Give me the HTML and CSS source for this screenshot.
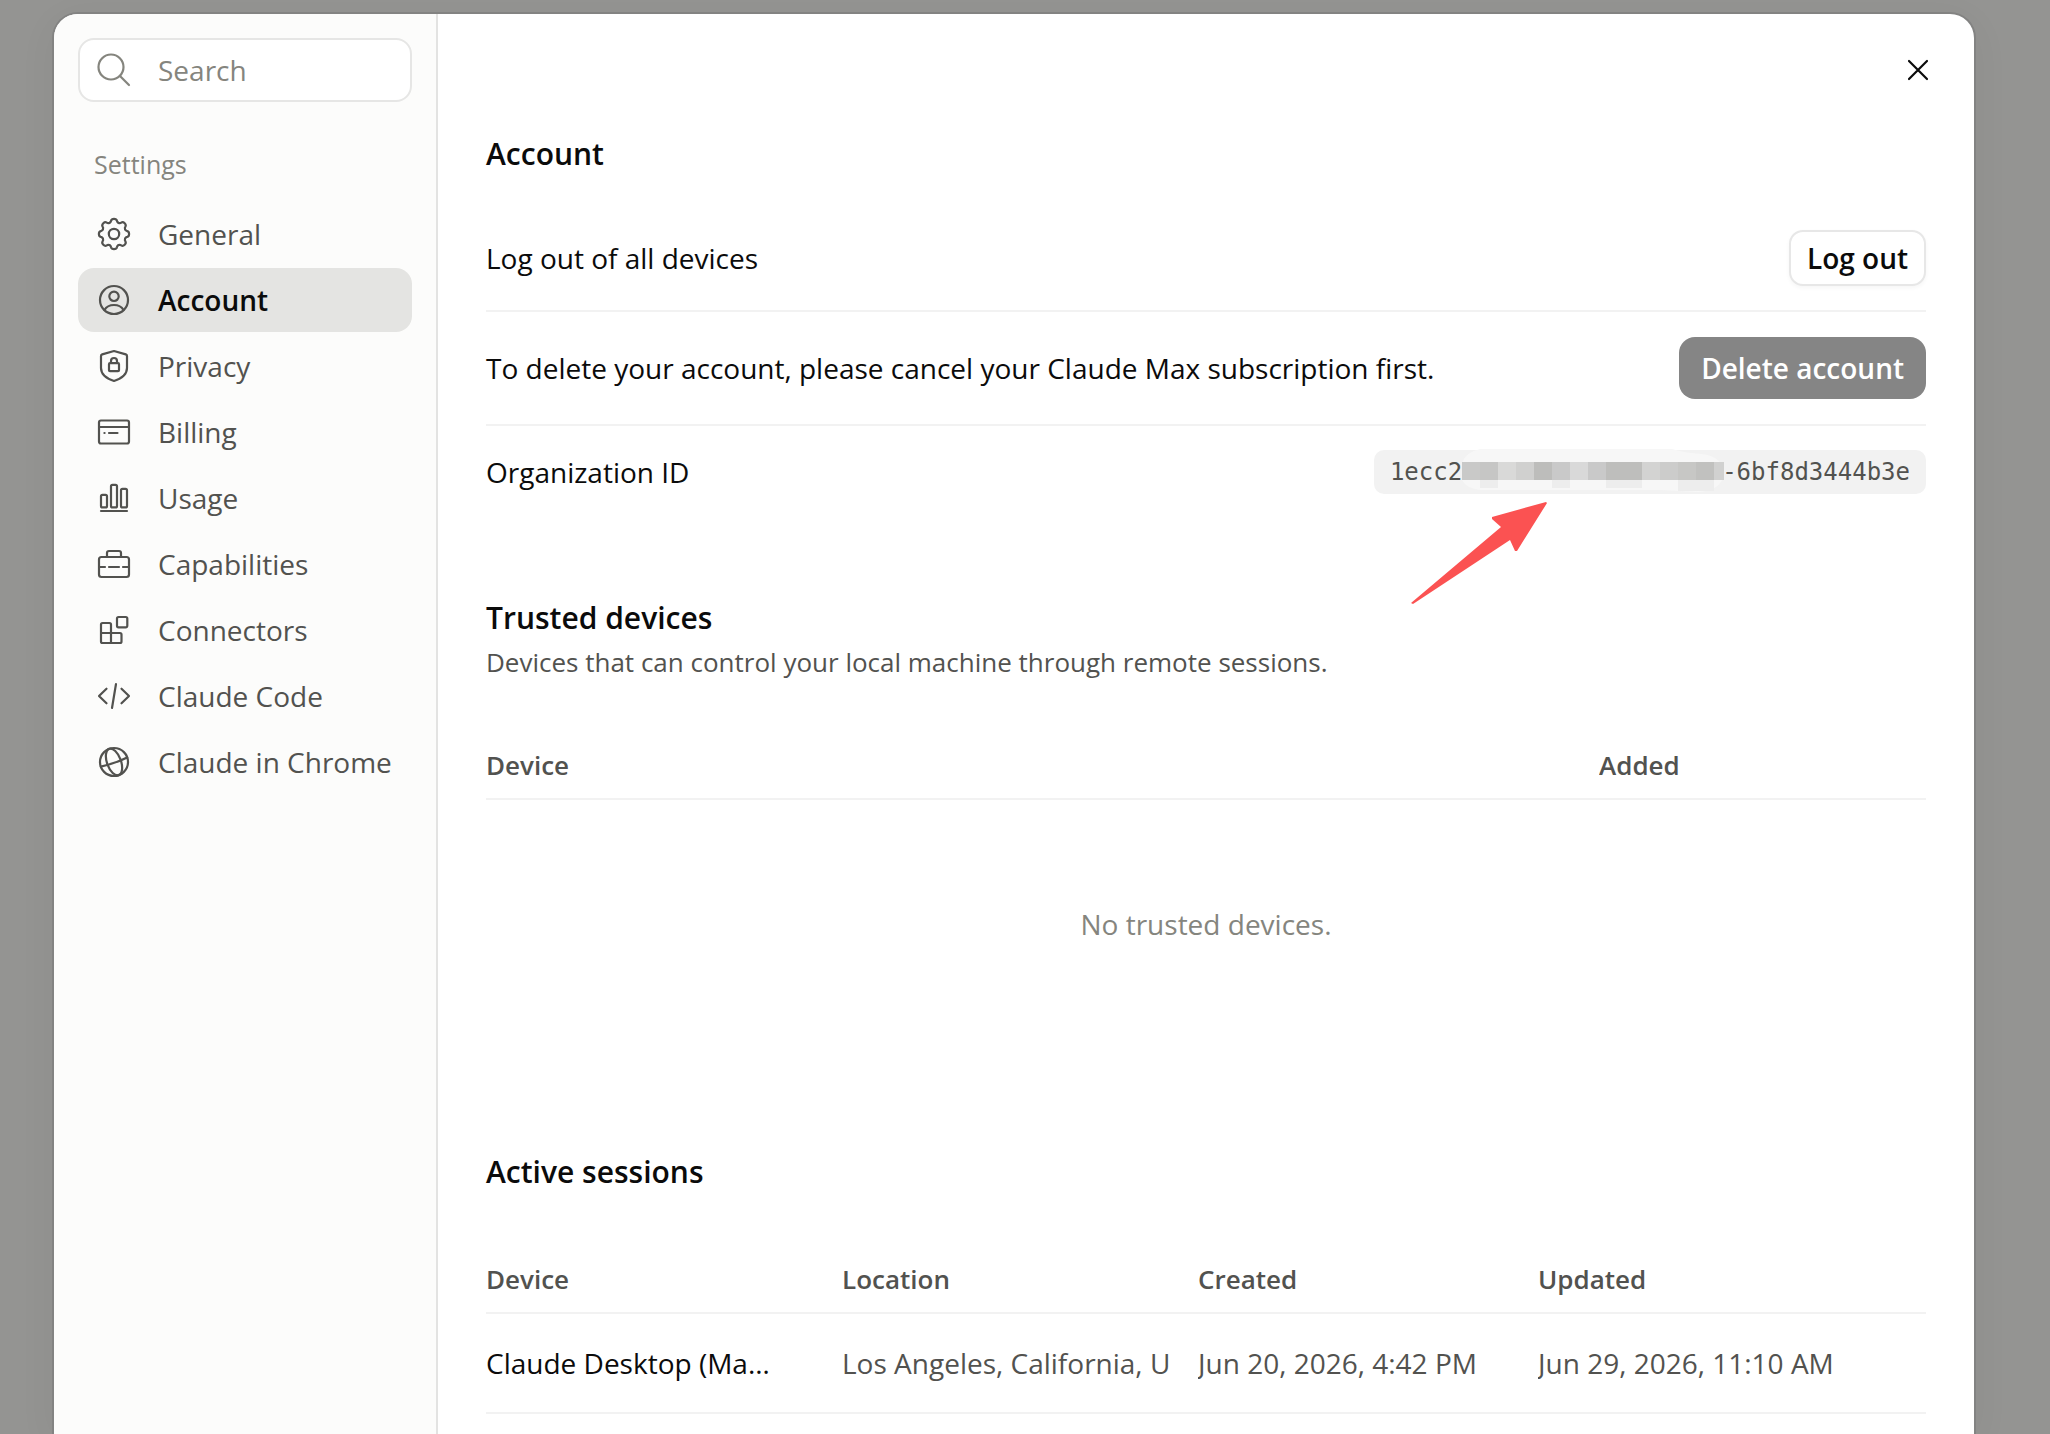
FILE: index.html
```html
<!DOCTYPE html>
<html lang="en">

<head>
    <meta charset="UTF-8">
    <meta name="viewport" content="width=device-width, initial-scale=1">
    <title>Settings</title>
    <link rel="stylesheet" href="styles.css">
</head>

<body>
    <div class="modal">
        <aside class="sidebar">
            <label class="search">
                <svg class="icon" viewBox="-20 -20 40 40" aria-hidden="true">
                    <circle cx="-3" cy="-3" r="12.5" />
                    <path d="M6 6L15 15" />
                </svg>
                <input type="text" placeholder="Search" aria-label="Search">
            </label>
            <h2 class="sidebar-title">Settings</h2>
            <nav class="menu">
                <a href="#">
                    <svg class="icon" viewBox="-20 -20 40 40" aria-hidden="true">
                        <path id="tooth" d="M-4.6 -11.1C-3.4 -11.6 -3.1 -12 -2.9 -13.2C-2.6 -14.6 -1.4 -15.1 0 -15.1C1.4 -15.1 2.6 -14.6 2.9 -13.2C3.1 -12 3.4 -11.6 4.6 -11.1" />
                        <use href="#tooth" transform="rotate(45)" />
                        <use href="#tooth" transform="rotate(90)" />
                        <use href="#tooth" transform="rotate(135)" />
                        <use href="#tooth" transform="rotate(180)" />
                        <use href="#tooth" transform="rotate(225)" />
                        <use href="#tooth" transform="rotate(270)" />
                        <use href="#tooth" transform="rotate(315)" />
                        <circle r="5.2" />
                    </svg>
                    General
                </a>
                <a href="#" class="active">
                    <svg class="icon" viewBox="-20 -20 40 40" aria-hidden="true">
                        <circle r="14" />
                        <circle cy="-3.7" r="4.7" />
                        <path d="M-9.5 10C-7.5 6.5 -4 5 0 5C4 5 7.5 6.5 9.5 10" />
                    </svg>
                    Account
                </a>
                <a href="#">
                    <svg class="icon" viewBox="-20 -20 40 40" aria-hidden="true">
                        <path d="M0 -15L-11.8 -11.6Q-13 -11.2 -13 -10V2C-13 9 -6 13 0 15C6 13 13 9 13 2V-10Q13 -11.2 11.8 -11.6Z" />
                        <rect x="-5" y="-2.8" width="10" height="8" rx="1" />
                        <path d="M-3 -3V-5A3 3 0 0 1 3 -5V-3" />
                    </svg>
                    Privacy
                </a>
                <a href="#">
                    <svg class="icon" viewBox="-20 -20 40 40" aria-hidden="true">
                        <rect x="-15" y="-11.5" width="30" height="23" rx="2" />
                        <path d="M-15 -5H15M-5 1H3.5M-9.6 1H-9.4" />
                    </svg>
                    Billing
                </a>
                <a href="#">
                    <svg class="icon" viewBox="-20 -20 40 40" aria-hidden="true">
                        <rect x="-13" y="-3.2" width="6" height="12.6" rx="1.5" />
                        <rect x="-3" y="-13.2" width="6" height="22.6" rx="1.5" />
                        <rect x="7" y="-9.2" width="6" height="18.6" rx="1.5" />
                        <path d="M-13 13H13" />
                    </svg>
                    Usage
                </a>
                <a href="#">
                    <svg class="icon" viewBox="-20 -20 40 40" aria-hidden="true">
                        <rect x="-15" y="-7" width="30" height="20" rx="2.5" />
                        <path d="M-7 -7V-11Q-7 -13 -5 -13H5Q7 -13 7 -11V-7M-15 3H-9M-5 3H5M9 3H15" />
                    </svg>
                    Capabilities
                </a>
                <a href="#">
                    <svg class="icon" viewBox="-20 -20 40 40" aria-hidden="true">
                        <path d="M-3 13V-5.5Q-3 -7 -4.5 -7H-11.5Q-13 -7 -13 -5.5V11.5Q-13 13 -11.5 13H6Q7.5 13 7.5 11.5V4.5Q7.5 3 6 3H-13" />
                        <rect x="3" y="-13" width="10.3" height="10.3" rx="1.5" />
                    </svg>
                    Connectors
                </a>
                <a href="#">
                    <svg class="icon" viewBox="-20 -20 40 40" aria-hidden="true">
                        <path d="M-7.5 -7.3L-15 0L-7.5 7.3M7.5 -7.3L15 0L7.5 7.3M2 -12L-2 12" />
                    </svg>
                    Claude Code
                </a>
                <a href="#">
                    <svg class="icon" viewBox="-20 -20 40 40" aria-hidden="true">
                        <circle r="14" />
                        <ellipse rx="7" ry="14" transform="rotate(-20)" />
                        <path d="M-13.2 4.6Q1 1.4 13.2 -4.6" />
                    </svg>
                    Claude in Chrome
                </a>
            </nav>
        </aside>

        <main class="content">
            <div class="topbar">
                <button class="close" aria-label="Close">
                    <svg class="icon" viewBox="-20 -20 40 40" aria-hidden="true">
                        <path d="M-9 -9L9 9M9 -9L-9 9" />
                    </svg>
                </button>
            </div>

            <section>
                <h3>Account</h3>
                <div class="rows">
                    <div class="row">
                        <span>Log out of all devices</span>
                        <button class="btn">Log out</button>
                    </div>
                    <div class="row tall">
                        <span>To delete your account, please cancel your Claude Max subscription first.</span>
                        <button class="btn danger" disabled>Delete account</button>
                    </div>
                    <div class="row">
                        <span>Organization ID</span>
                        <div class="org-id">
                            <code>1ecc2</code>
                            <svg class="mosaic" viewBox="0 0 260 44" aria-hidden="true">
                                <path fill="#f7f7f7" d="M0 13Q4 2 18 -1H210Q222 3 240 4Q256 6 260 16V30Q256 40 236 42L200 40H18Q4 38 0 30Z" />
                                <path fill="#ededed" d="M18 30H36V38H18ZM90 30H108V38H90ZM144 30H162V38H144ZM162 30H180V38H162ZM216 30H252V41H216Z" />
                                <rect x="0" y="12" width="18" height="18" fill="#c9c9c8" />
                                <rect x="18" y="12" width="18" height="18" fill="#c6c6c5" />
                                <rect x="36" y="12" width="18" height="18" fill="#d9d9d8" />
                                <rect x="54" y="12" width="18" height="18" fill="#d0d0cf" />
                                <rect x="72" y="12" width="18" height="18" fill="#bdbdbb" />
                                <rect x="90" y="12" width="18" height="18" fill="#c9c9c9" />
                                <rect x="108" y="12" width="18" height="18" fill="#d9d9d9" />
                                <rect x="126" y="12" width="18" height="18" fill="#c9c9c9" />
                                <rect x="144" y="12" width="36" height="18" fill="#bebebc" />
                                <rect x="180" y="12" width="18" height="18" fill="#d3d3d2" />
                                <rect x="198" y="12" width="18" height="18" fill="#cccccb" />
                                <rect x="216" y="12" width="18" height="18" fill="#c7c7c5" />
                                <rect x="234" y="12" width="18" height="18" fill="#c1c1bf" />
                                <rect x="252" y="12" width="10" height="18" fill="#d1d1d0" />
                            </svg>
                            <code>-6bf8d3444b3e</code>
                            <svg class="arrow" viewBox="0 0 136 104" aria-hidden="true">
                                <path d="M135 1L81 16V18L90 26L0 102L2 103L99 39L104 50H106L136 2Z" />
                            </svg>
                        </div>
                    </div>
                </div>
            </section>

            <section>
                <h3>Trusted devices</h3>
                <p class="description">Devices that can control your local machine through remote sessions.</p>
                <table class="trusted">
                    <thead>
                        <tr>
                            <th>Device</th>
                            <th>Added</th>
                        </tr>
                    </thead>
                    <tbody>
                        <tr>
                            <td colspan="2" class="empty">No trusted devices.</td>
                        </tr>
                    </tbody>
                </table>
            </section>

            <section>
                <h3>Active sessions</h3>
                <table class="sessions">
                    <thead>
                        <tr>
                            <th>Device</th>
                            <th>Location</th>
                            <th>Created</th>
                            <th>Updated</th>
                        </tr>
                    </thead>
                    <tbody>
                        <tr>
                            <td class="device">Claude Desktop (Ma…</td>
                            <td>Los Angeles, California, U</td>
                            <td>Jun 20, 2026, 4:42 PM</td>
                            <td>Jun 29, 2026, 11:10 AM</td>
                        </tr>
                    </tbody>
                </table>
            </section>
        </main>
    </div>
</body>

</html>
```
FILE: styles.css
```css
* {
    box-sizing: border-box;
}

body,
h2,
h3,
p {
    margin: 0;
    padding: 0;
}

body {
    font-family: "Open Sans", "Noto Sans", sans-serif;
    font-size: 28px;
    line-height: 40px;
    color: #0b0b0b;
    background: #949492;
    height: 100vh;
    padding: 14px 76px 0 54px;
    overflow: hidden;
}

.modal {
    display: flex;
    height: 100%;
    background: #fff;
    border-radius: 24px 24px 0 0;
    box-shadow: 0 0 0 2px #838382, 0 8px 40px rgba(0, 0, 0, 0.05);
    overflow: hidden;
}

.icon {
    width: 40px;
    height: 40px;
    flex-shrink: 0;
    fill: none;
    stroke: currentColor;
    stroke-width: 2.2;
    stroke-linecap: round;
    stroke-linejoin: round;
}

/* sidebar */
.sidebar {
    width: 384px;
    flex-shrink: 0;
    padding: 24px;
    background: #fcfcfb;
    border-right: 2px solid #e3e3e2;
}

.search {
    display: flex;
    align-items: center;
    gap: 24px;
    height: 64px;
    padding: 0 14px;
    background: #fff;
    border: 2px solid #e6e6e5;
    border-radius: 16px;
    color: #85857e;
}

.search input {
    width: 100%;
    min-width: 0;
    padding: 0;
    border: none;
    outline: none;
    background: none;
    font: inherit;
    color: inherit;
}

.search input::placeholder {
    color: #85857e;
    opacity: 1;
}

.sidebar-title {
    margin: 46px 16px 22px;
    font-size: 25px;
    font-weight: 400;
    line-height: 32px;
    color: #85857e;
}

.menu {
    display: flex;
    flex-direction: column;
    gap: 2px;
}

.menu a {
    display: flex;
    align-items: center;
    gap: 24px;
    height: 64px;
    padding: 0 16px;
    border-radius: 16px;
    color: #52524f;
    text-decoration: none;
    white-space: nowrap;
}

.menu .active {
    background: #e4e4e2;
    color: #0b0b0b;
    font-weight: 600;
}

.menu .active .icon {
    color: #52524f;
}

/* content */
.content {
    flex: 1;
    min-width: 0;
    padding: 36px 48px 0;
}

.topbar {
    display: flex;
    justify-content: flex-end;
    margin: 0 -12px 44px 0;
}

.close {
    display: flex;
    padding: 0;
    border: none;
    background: none;
    color: #0b0b0b;
    cursor: pointer;
}

section + section {
    margin-top: 80px;
}

h3 {
    font-size: 30px;
    font-weight: 600;
    line-height: 40px;
}

.rows {
    margin-top: 32px;
}

.row {
    display: flex;
    align-items: center;
    justify-content: space-between;
    gap: 32px;
    padding: 24px 0;
}

.row + .row {
    border-top: 2px solid #f2f2f2;
}

.row.tall {
    padding: 25px 0;
}

.btn {
    height: 56px;
    padding: 0 16px;
    background: #fff;
    border: 2px solid #e7e7e7;
    border-radius: 14px;
    box-shadow: 0 2px 4px rgba(0, 0, 0, 0.04);
    font: inherit;
    font-weight: 600;
    color: #0b0b0b;
    white-space: nowrap;
}

.btn.danger {
    height: 62px;
    padding: 0 22px;
    background: #858585;
    border: none;
    border-radius: 16px;
    box-shadow: none;
    color: #fff;
}

.org-id {
    position: relative;
    display: flex;
    align-items: center;
    height: 44px;
    padding: 0 16px;
    background: #f2f2f2;
    border-radius: 10px;
    color: #52524f;
}

.org-id code {
    font-family: "DejaVu Sans Mono", monospace;
    font-size: 24px;
    line-height: 32px;
}

.mosaic {
    width: 260px;
    height: 44px;
    overflow: visible;
}

.arrow {
    position: absolute;
    top: 51px;
    right: 379px;
    width: 136px;
    height: 104px;
    fill: #fb5252;
}

.description {
    margin-top: 8px;
    font-size: 26px;
    line-height: 32px;
    color: #52524f;
}

table {
    width: 100%;
    margin-top: 56px;
    border-spacing: 0;
    table-layout: fixed;
}

.trusted {
    margin-bottom: 104px;
}

th,
td {
    padding: 0 16px 0 0;
    border-bottom: 2px solid #f2f2f2;
    color: #52524f;
    text-align: left;
    white-space: nowrap;
    overflow: hidden;
}

th {
    padding-top: 15px;
    padding-bottom: 17px;
    font-size: 26px;
    font-weight: 600;
    line-height: 32px;
}

td {
    height: 100px;
}

td.device {
    color: #0b0b0b;
}

td.empty {
    height: 248px;
    padding: 0;
    border: none;
    text-align: center;
    color: #85857e;
}

.trusted th:last-child {
    width: 327px;
}

.sessions th:nth-child(-n+2) {
    width: 356px;
}

.sessions th:nth-child(3) {
    width: 340px;
}
```
